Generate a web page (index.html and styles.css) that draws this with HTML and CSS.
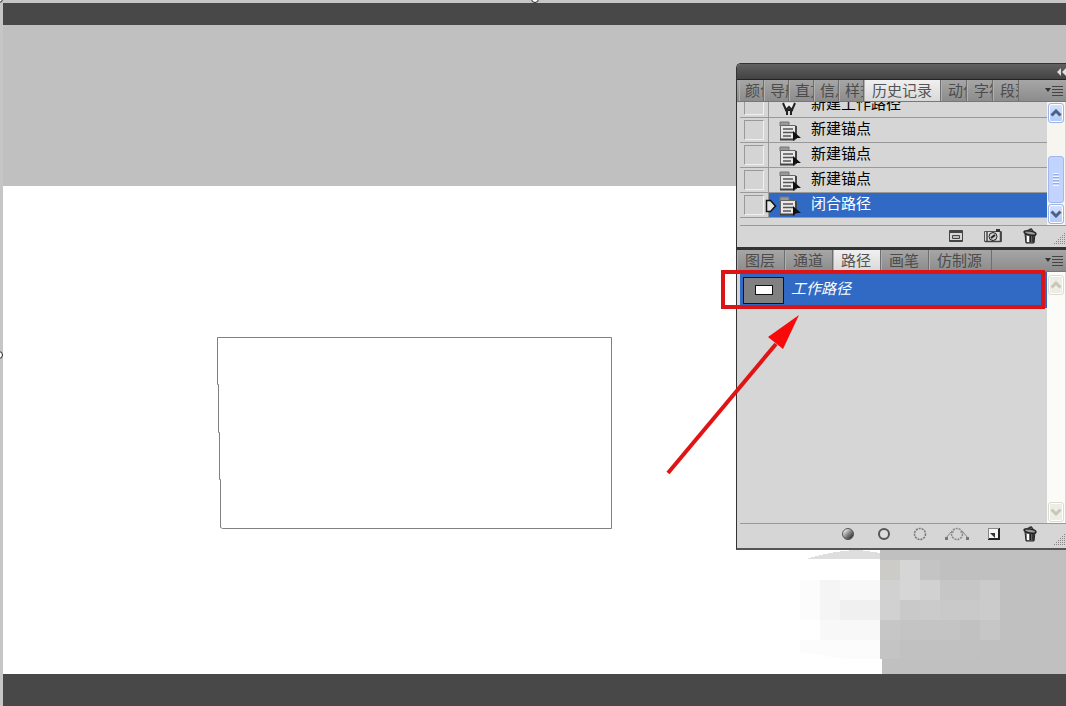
FILE: index.html
```html
<!DOCTYPE html>
<html lang="zh-CN">
<head>
    <meta charset="UTF-8">
    <meta name="viewport" content="width=device-width, initial-scale=1.0">
    <title>工作路径</title>
    <link rel="stylesheet" href="styles.css">
</head>
<body>
    <!-- shared icons -->
    <svg class="defs" width="0" height="0" aria-hidden="true">
        <linearGradient id="ball" x1="0" y1="0" x2="1" y2="1">
            <stop offset=".1" stop-color="#fff"/>
            <stop offset=".5" stop-color="#888"/>
            <stop offset="1" stop-color="#111"/>
        </linearGradient>
        <symbol id="state" viewBox="0 0 22 20">
            <path d="M1 1h9v4H1z" fill="#999" stroke="#777"/>
            <path d="M1.500 4.500h15v14h-15z" fill="#e8e8e8" stroke="#666"/>
            <path d="M17 5v13M1 18.500h15" stroke="#444" stroke-width="2" fill="none"/>
            <path d="M4 8h10M4 11.500h10M4 15h8" stroke="#555" stroke-width="1.500" fill="none"/>
            <path d="M14 10v10l3-3 5 0z" fill="#111"/>
        </symbol>
        <symbol id="pen" viewBox="0 0 22 20">
            <path d="M4 7l3 7 3-3 3 3 3-7" fill="#eee" stroke="#222" stroke-width="2"/>
            <path d="M6 14h8M8 14v5M12 14v5" fill="none" stroke="#222" stroke-width="2"/>
        </symbol>
        <symbol id="trash" viewBox="0 0 14 16">
            <path d="M2 6h10l-1 9H3z" fill="#777" stroke="#222"/>
            <path d="M5 8v6" stroke="#fff" stroke-width="2"/>
            <path d="M7.500 8v6M10 8v6" stroke="#222" stroke-width="1.500"/>
            <ellipse cx="7" cy="5" rx="6" ry="2" fill="#999" stroke="#222" stroke-width="1.500" transform="rotate(10 7 5)"/>
            <path d="M4 3l4-2 2 2" fill="none" stroke="#333" stroke-width="1.500"/>
        </symbol>
        <symbol id="menu" viewBox="0 0 18 12">
            <path d="M0 3h6L3 7z" fill="#333"/>
            <path d="M7 1.500h11M7 4.500h11M7 7.500h11M7 10.500h11" stroke="#444" fill="none"/>
        </symbol>
        <symbol id="up" viewBox="0 0 12 8">
            <path d="M1.500 6.500L6 2l4.500 4.500" fill="none" stroke="currentColor" stroke-width="3"/>
        </symbol>
        <symbol id="down" viewBox="0 0 12 8">
            <path d="M1.500 1.500L6 6l4.500-4.500" fill="none" stroke="currentColor" stroke-width="3"/>
        </symbol>
        <symbol id="grip" viewBox="0 0 12 12">
            <path d="M10 1.500h2M8 3.500h4M6 5.500h6M4 7.500h8M2 9.500h10M0 11.500h12" stroke="#888" stroke-dasharray="1 1" fill="none"/>
        </symbol>
    </svg>

    <div class="workspace">
        <div class="bar bar-top"></div>
        <main class="canvas">
            <div class="document"></div>
            <svg class="work-path" width="396" height="194" fill="none" stroke="#808080">
                <path d="M394.500 191.500V.500H.500v47h1v48h1v47h1v48l2 1z"/>
            </svg>
            <svg class="mosaic" width="220" height="110" shape-rendering="crispEdges">
                <path d="M6 9Q35 0 60 0L80 3v6z" fill="#dedede"/>
                <path d="M80 0h2v10h-2z" fill="#c0c0c0"/>
                <path d="M80 10h20v20H80z" fill="#cccbc8"/>
                <path d="M100 10h20v40h-20z" fill="#d6d6d6"/>
                <path d="M120 10h20v20h-20z" fill="#c4c4c4"/>
                <path d="M0 30h20v40H0z" fill="#fcfcfc"/>
                <path d="M20 30h20v40H20z" fill="#f5f5f5"/>
                <path d="M40 30h40v20H40z" fill="#f8f8f8"/>
                <path d="M40 50h40v20H40z" fill="#f0f0f0"/>
                <path d="M80 30h20v40H80zM120 30h20v20h-20z" fill="#d1d1d1"/>
                <path d="M100 50h20v20h-20zM140 50h40v20h-40z" fill="#c9c9c9"/>
                <path d="M120 50h20v20h-20zM180 30h20v40h-20z" fill="#cbcbcb"/>
                <path d="M140 30h40v20h-40z" fill="#c6c6c6"/>
                <path d="M20 70h60v20H20z" fill="#f8f8f8"/>
                <path d="M80 70h20v20H80zM180 70h20v20h-20z" fill="#c6c6c6"/>
                <path d="M100 70h60v20h-60zM80 90h20v19H80z" fill="#c4c4c4"/>
                <path d="M160 70h20v20h-20zM100 90h80v19h-80z" fill="#c1c1c1"/>
                <path d="M0 90h80v19H44L0 102z" fill="#fcfcfc"/>
            </svg>
        </main>
        <div class="bar bar-bottom"></div>
        <span class="handle handle-corner"></span>
        <span class="handle handle-top"></span>
        <span class="handle handle-left"></span>
    </div>

    <aside class="panel">
        <header class="panel-title">
            <button class="plain" aria-label="折叠">
                <svg width="10" height="8"><path d="M5 0v8L1 4zM10 0v8L6 4z" fill="#ddd"/></svg>
            </button>
        </header>

        <section class="history">
            <nav class="tabs">
                <button class="tab tab-short">颜色</button>
                <button class="tab tab-short">导航器</button>
                <button class="tab tab-short">直方图</button>
                <button class="tab tab-short">信息</button>
                <button class="tab tab-short">样式</button>
                <button class="tab active">历史记录</button>
                <button class="tab tab-short">动作</button>
                <button class="tab tab-short">字符</button>
                <button class="tab tab-short">段落</button>
                <button class="plain tab-menu" aria-label="菜单"><svg width="18" height="12"><use href="#menu"/></svg></button>
            </nav>
            <div class="list-area">
                <ul class="states">
                    <li><span class="source"><button aria-label="源"></button></span><svg class="icon" width="22" height="20"><use href="#pen"/></svg><span class="name">新建工作路径</span></li>
                    <li><span class="source"><button aria-label="源"></button></span><svg class="icon" width="22" height="20"><use href="#state"/></svg><span class="name">新建锚点</span></li>
                    <li><span class="source"><button aria-label="源"></button></span><svg class="icon" width="22" height="20"><use href="#state"/></svg><span class="name">新建锚点</span></li>
                    <li><span class="source"><button aria-label="源"></button></span><svg class="icon" width="22" height="20"><use href="#state"/></svg><span class="name">新建锚点</span></li>
                    <li class="current">
                        <span class="source"><button aria-label="源"></button></span>
                        <svg class="pointer" width="12" height="14"><path d="M1.500 1.500h4l5 5.500-5 5.500h-4z" fill="#e4e4e4" stroke="#111" stroke-width="1.500"/></svg>
                        <svg class="icon" width="22" height="20"><use href="#state"/></svg><span class="name">闭合路径</span>
                    </li>
                </ul>
                <div class="scrollbar">
                    <button aria-label="向上"><svg width="12" height="8"><use href="#up"/></svg></button>
                    <div class="track"><div class="thumb"></div></div>
                    <button aria-label="向下"><svg width="12" height="8"><use href="#down"/></svg></button>
                </div>
            </div>
            <footer class="tools">
                <button class="plain" aria-label="从当前状态创建新文档">
                    <svg width="14" height="12" fill="none" stroke="#444"><path d="M.500.500h13v11H.500z"/><path d="M1 2h12M1 11h12" stroke-width="2"/><path d="M3.500 5.500h7v3h-7z" fill="#bbb"/></svg>
                </button>
                <button class="plain" aria-label="创建新快照">
                    <svg width="18" height="14"><path d="M.500 2.500h17v10H.500z" fill="#ddd" stroke="#555"/><path d="M3 3v10M16.500 3v10M1 12.500h16" stroke="#444" stroke-width="1.500"/><circle cx="9" cy="7.500" r="4" fill="#ccc" stroke="#222"/><path d="M7 9l4-3" stroke="#222" stroke-width="2"/><path d="M12 0h4v3h-4z" fill="#333"/></svg>
                </button>
                <button class="plain" aria-label="删除"><svg width="14" height="16"><use href="#trash"/></svg></button>
                <svg class="grip" width="12" height="12"><use href="#grip"/></svg>
            </footer>
        </section>

        <section class="paths">
            <nav class="tabs">
                <button class="tab">图层</button>
                <button class="tab">通道</button>
                <button class="tab active">路径</button>
                <button class="tab">画笔</button>
                <button class="tab">仿制源</button>
                <button class="plain tab-menu" aria-label="菜单"><svg width="18" height="12"><use href="#menu"/></svg></button>
            </nav>
            <div class="list-area">
                <ul class="path-list">
                    <li>
                        <span class="preview"><span></span></span>
                        <em>工作路径</em>
                    </li>
                </ul>
                <div class="scrollbar off">
                    <button aria-label="向上" disabled><svg width="12" height="8"><use href="#up"/></svg></button>
                    <div class="track"></div>
                    <button aria-label="向下" disabled><svg width="12" height="8"><use href="#down"/></svg></button>
                </div>
            </div>
            <footer class="tools">
                <button class="plain" aria-label="填充路径"><svg width="14" height="14"><circle cx="7" cy="7" r="5.500" fill="url(#ball)" stroke="#555"/></svg></button>
                <button class="plain" aria-label="描边路径"><svg width="14" height="14"><circle cx="7" cy="7" r="5" fill="#ddd" stroke="#555" stroke-width="2"/></svg></button>
                <button class="plain" aria-label="载入选区"><svg width="14" height="14"><circle cx="7" cy="7" r="5.500" fill="none" stroke="#777" stroke-width="1.500" stroke-dasharray="2 1"/></svg></button>
                <button class="plain make-path" aria-label="生成工作路径"><svg width="26" height="14" fill="none" stroke="#888"><circle cx="13" cy="7" r="5.500" stroke-width="1.500" stroke-dasharray="2 1"/><path d="M2 11L7 5h3M24 11l-5-6h-3"/><path d="M1 10h3v3H1zM22 10h3v3h-3z" fill="#777" stroke="none"/></svg></button>
                <button class="plain" aria-label="新建路径"><svg width="14" height="14"><path d="M1 1h12v12H1z" fill="#f4f4f4"/><path d="M12 1v11H1" fill="none" stroke="#222" stroke-width="2"/><path d="M1.500 1v11M1 1.500h11" stroke="#888"/><path d="M3 6h5v5z" fill="#333"/></svg></button>
                <button class="plain" aria-label="删除"><svg width="14" height="16"><use href="#trash"/></svg></button>
                <svg class="grip" width="12" height="12"><use href="#grip"/></svg>
            </footer>
        </section>

        <!-- red annotation -->
        <div class="callout"></div>
        <svg class="arrow" width="134" height="162">
            <path d="M2 159L110 30" stroke="#e01414" stroke-width="4"/>
            <path d="M133 1L102 23l15 12z" fill="#f80a0a"/>
        </svg>
    </aside>
</body>
</html>
```

FILE: styles.css
```css
* {
    box-sizing: border-box;
}
body {
    margin: 0;
    position: relative;
    overflow: hidden;
    font-family: "Liberation Sans", "Noto Sans CJK SC", sans-serif;
    font-size: 15px;
    color: #111;
}
ul {
    list-style: none;
    margin: 0;
    padding: 0;
}
button {
    font: inherit;
    color: inherit;
    border: none;
    padding: 0;
}
svg {
    display: block;
    flex: none;
}
.defs {
    position: absolute;
}
.plain {
    background: none;
}

/* document window */
.workspace {
    position: relative;
    display: flex;
    flex-direction: column;
    height: 100vh;
    padding: 3px 0 0 3px;
    background: #c6c6c6;
}
.bar {
    background: #484848;
}
.bar-top {
    height: 22px;
}
.bar-bottom {
    height: 32px;
}
.canvas {
    position: relative;
    display: flex;
    flex: 1;
    padding: 161px 184px 0 0;
    background: #c0c0c0;
}
.document {
    flex: 1;
    background: #fff;
}
.work-path {
    position: absolute;
    left: 214px;
    top: 312px;
}
.mosaic {
    position: absolute;
    right: 46px;
    top: 525px;
}
.handle {
    position: absolute;
    width: 8px;
    height: 8px;
    border: 1px solid #222;
    border-radius: 50%;
    background: #fff;
}
.handle-corner {
    left: -5px;
    top: -5px;
}
.handle-top {
    left: 50%;
    top: -5px;
    margin-left: -2px;
}
.handle-left {
    left: -5px;
    top: 50%;
    margin-top: -2px;
}

/* floating panel */
.panel {
    position: absolute;
    right: 0;
    top: 63px;
    width: 330px;
    border: 1px solid #333;
    border-right: none;
    border-bottom: 2px solid #555;
    border-radius: 5px 0 0 0;
    background: #d6d6d6;
}
.panel-title {
    display: flex;
    align-items: center;
    justify-content: flex-end;
    height: 16px;
    border-bottom: 1px solid #222;
    border-radius: 4px 0 0 0;
    background: linear-gradient(#606060, #434343);
}
.tabs {
    display: flex;
    height: 22px;
    background: linear-gradient(#a6a6a6, #8c8c8c);
    border-bottom: 1px solid #777;
}
.tab {
    padding: 0 8px;
    line-height: 20px;
    overflow: hidden;
    white-space: nowrap;
    text-align: left;
    color: #4c4c4c;
    background: none;
    border-right: 1px solid #6e6e6e;
    box-shadow: inset 1px 0 #b0b0b0;
}
.tab-short {
    width: 25px;
    padding: 0 0 0 6px;
}
.active ~ .tab-short {
    width: 26px;
    padding-left: 7px;
}
.tab.active {
    background: linear-gradient(#f0f0f0, #d9d9d9);
    color: #555;
}
.history .tabs {
    padding-left: 2px;
}
.paths .tab {
    padding: 0 9px 0 8px;
}
.tab-menu {
    margin: 0 3px 0 auto;
}
.list-area {
    display: flex;
    margin-left: 3px;
    border-bottom: 1px solid #999;
}

/* history */
.history {
    border-bottom: 3px solid #333;
}
.history .list-area {
    height: 124px;
}
.states {
    display: flex;
    flex: 1;
    flex-direction: column;
    justify-content: flex-end;
    overflow: hidden;
    padding-bottom: 7px;
}
.states li {
    position: relative;
    display: flex;
    flex: none;
    align-items: center;
    height: 25px;
    border-top: 1px solid #999;
}
.states li:last-child {
    height: 26px;
    border-bottom: 1px solid #999;
}
.name {
    line-height: 20px;
    padding-bottom: 3px;
    color: #000;
}
.source {
    align-self: stretch;
    width: 29px;
    padding: 2px 4px;
    border-right: 1px solid #999;
    background: #d6d6d6;
}
.source button {
    display: block;
    width: 20px;
    height: 20px;
    background: #d4d4d4;
    border: 1px solid;
    border-color: #999 #f0f0f0 #f0f0f0 #999;
}
.icon {
    margin: 1px 10px 0;
}
.current {
    background: #316ac5;
}
.current .name {
    color: #fff;
}
.pointer {
    position: absolute;
    left: 25px;
    top: 6px;
}

/* scrollbar */
.scrollbar {
    display: flex;
    flex-direction: column;
    width: 18px;
    margin-right: 1px;
    padding: 1px;
    background: #f6f5f0;
    color: #4d6185;
}
.scrollbar button {
    display: flex;
    align-items: center;
    justify-content: center;
    height: 20px;
    border: 1px solid #9cb4e8;
    border-radius: 3px;
    background: linear-gradient(#d5e2ff, #b4cafa);
    box-shadow: inset 0 0 0 1px #fff;
}
.track {
    display: flex;
    flex: 1;
    flex-direction: column;
    justify-content: flex-end;
}
.thumb {
    height: 47px;
    margin-bottom: 1px;
    padding: 16px 4px;
    border: 1px solid #a3b9ee;
    border-radius: 3px;
    background: repeating-linear-gradient(#f0f5ff 0 1px, #8fabeb 1px 2px, transparent 2px 3px) content-box, #c2d3fd;
}
.off {
    padding-top: 3px;
    background: #fbfbf8;
}
.off button {
    border-color: #dddcd0;
    background: #eeede5;
    color: #c9c7ba;
}

/* bottom tool rows */
.tools {
    position: relative;
    display: flex;
    align-items: center;
    justify-content: flex-end;
    height: 21px;
    padding: 0 29px 2px 0;
    gap: 21px;
}
.paths .tools {
    height: 24px;
    padding-bottom: 5px;
    gap: 22px;
}
.make-path {
    margin: 0 -5px;
}
.grip {
    position: absolute;
    right: 0;
    bottom: 3px;
}

/* paths */
.paths .list-area {
    min-height: 252px;
}
.path-list {
    flex: 1;
}
.path-list li {
    display: flex;
    align-items: center;
    gap: 7px;
    height: 36px;
    padding-left: 3px;
    background: #316ac5;
    color: #fff;
}
.path-list em {
    line-height: 20px;
    padding-bottom: 3px;
}
.preview {
    display: flex;
    align-items: center;
    justify-content: center;
    width: 41px;
    height: 27px;
    border: 1px solid #111;
    background: #808080;
}
.preview span {
    width: 18px;
    height: 10px;
    border: 1px solid #111;
    background: #fff;
}

/* annotation */
.callout {
    position: absolute;
    left: -16px;
    right: 21px;
    top: 206px;
    height: 39px;
    border: 4px solid #dc1416;
}
.arrow {
    position: absolute;
    left: -71px;
    top: 250px;
}
```
